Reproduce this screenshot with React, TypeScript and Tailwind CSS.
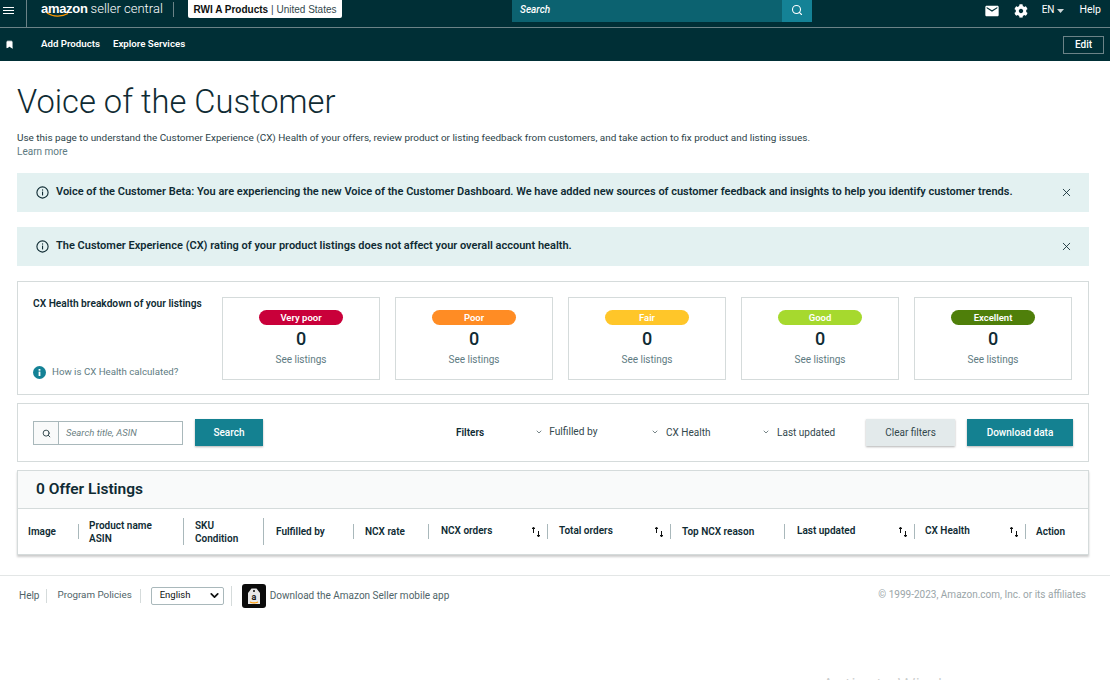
import React from 'react';
import { Search, X, ChevronDown, Bookmark } from 'lucide-react';
import { FaCog } from 'react-icons/fa';
import { MdEmail } from 'react-icons/md';

const grades = [
  { label: 'Very poor', color: 'bg-[#c9003a]' },
  { label: 'Poor', color: 'bg-[#ff8c24]' },
  { label: 'Fair', color: 'bg-[#ffc629]' },
  { label: 'Good', color: 'bg-[#a6d92e]' },
  { label: 'Excellent', color: 'bg-[#4f7f0a]' },
];

const SortIcon = () => (
  <svg width="10" height="12" viewBox="0 0 10 12" className="text-[#0f1111]">
    <path d="M2.5 7V1.5M1.2 3l1.3-2L3.8 3" fill="none" stroke="currentColor" strokeWidth="1" />
    <path d="M7.5 5v6M6.2 9l1.3 2L8.8 9" fill="none" stroke="currentColor" strokeWidth="1" />
  </svg>
);

const InfoOutline = () => (
  <svg width="13" height="13" viewBox="0 0 13 13" className="shrink-0">
    <circle cx="6.5" cy="6.5" r="5.6" fill="none" stroke="#0f2b33" strokeWidth="1.1" />
    <rect x="6" y="5.6" width="1.1" height="3.8" fill="#0f2b33" />
    <rect x="6" y="3.4" width="1.1" height="1.2" fill="#0f2b33" />
  </svg>
);

const Alert = ({ text }: { text: string }) => (
  <div className="flex items-center h-[39px] bg-[#e3f1f1] pl-[19px] pr-[16px]">
    <InfoOutline />
    <span className="ml-[7px] text-[11px] font-semibold text-[#0f2b33] flex-1 whitespace-nowrap">{text}</span>
    <X size={13} strokeWidth={1.6} className="text-[#0f2b33] -mt-px" />
  </div>
);

const Divider = ({ h = 'h-[15px]' }: { h?: string }) => <div className={`w-px ${h} bg-[#a9b8bb] shrink-0`} />;

const Th = ({ w, pl = 'pl-[12px]', lines, sort, h }: { w: string; pl?: string; lines: string[]; sort?: boolean; h?: string }) => (
  <>
    <div className={`${w} ${pl} shrink-0 flex items-center justify-between pr-[6px] text-[10px] font-semibold leading-[13px] text-[#0f2b33]`}>
      <div className={sort ? '-mt-[2px]' : ''}>
        {lines.map((l) => (
          <div key={l}>{l}</div>
        ))}
      </div>
      {sort && <SortIcon />}
    </div>
    {h !== 'none' && <Divider h={h} />}
  </>
);

const App = () => {
  return (
    <div className="h-screen overflow-hidden bg-white relative font-['Roboto','Noto_Sans',sans-serif] text-[#0f2b33]">
      {/* top bar */}
      <div className="bg-[#002f36] text-white">
        <div className="h-[28px] flex border-b border-[#6b8387]">
          <div className="w-[27px] border-r border-[#6b8387] pl-[3px] pt-[7px] shrink-0">
            <div className="w-[11px] h-px bg-white mb-[2px]" />
            <div className="w-[11px] h-px bg-white mb-[2px]" />
            <div className="w-[11px] h-px bg-white" />
          </div>
          <div className="relative ml-[14px] w-[120px] h-[22px] leading-[16px] whitespace-nowrap">
            <span className="font-['Liberation_Sans',sans-serif] text-[13px] font-bold tracking-[-0.3px]">amazon</span>
            <span className="font-['Roboto',sans-serif] text-[13px] ml-[3px] font-light">seller central</span>
            <svg width="26" height="6" viewBox="0 0 26 6" className="absolute left-[5px] top-[12px]">
              <path d="M1 1c6 4 15 4 21 .5" fill="none" stroke="#ff9900" strokeWidth="1.3" />
            </svg>
          </div>
          <div className="w-px h-[15px] bg-[#6b8387] ml-[12px] mt-[2px]" />
          <div className="ml-[14px] w-[154px] h-[18px] bg-white rounded-b-[2px] flex items-center justify-center font-['Liberation_Sans',sans-serif] text-[10px] text-[#0f1111] whitespace-nowrap">
            <span className="font-bold">RWI A Products</span>
            <span className="ml-[3px] text-[#33484d]">| United States</span>
          </div>
          <div className="ml-[170px] w-[270px] h-[22px] bg-[#0c6270] pl-[8px] pb-[3px] flex items-center text-[10px] italic font-medium">Search</div>
          <div className="w-[30px] h-[22px] bg-[#148296] flex items-center justify-center pb-[3px]">
            <Search size={12} strokeWidth={2.2} />
          </div>
          <div className="flex-1 flex items-start justify-end pr-[9px] pt-[3px] text-[10.5px]">
            <MdEmail size={16} className="mr-[14px]" />
            <FaCog size={14} className="mr-[14px] mt-px" />
            <span className="leading-[14px] text-[10px]">EN</span>
            <svg width="7" height="4" viewBox="0 0 7 4" className="ml-[3px] mt-[6px]">
              <path d="M0 0h7L3.5 4z" fill="#cfd8da" />
            </svg>
            <span className="ml-[15px] leading-[14px]">Help</span>
          </div>
        </div>
        <div className="h-[33px] flex items-center">
          <Bookmark size={9} fill="white" stroke="white" className="ml-[5px]" />
          <span className="ml-[27px] text-[9.7px] font-semibold">Add Products</span>
          <span className="ml-[13px] text-[9.7px] font-semibold">Explore Services</span>
          <div className="ml-auto mr-[6px] w-[41px] h-[18px] border border-[#6b8387] flex items-center justify-center text-[10px] font-medium">Edit</div>
        </div>
      </div>

      <div className="px-[17px] w-[1089px] box-content">
        <div className="w-[1072px]">
          <h1 className="mt-[19px] text-[32.7px] font-light leading-[44px] text-[#0f2b33]">Voice of the Customer</h1>
          <p className="mt-[7px] text-[9.95px] leading-[14px] text-[#2b4248]">
            Use this page to understand the Customer Experience (CX) Health of your offers, review product or listing feedback from customers, and take action to fix product and listing issues.
          </p>
          <p className="text-[10px] leading-[14px] text-[#5e7b82]">Learn more</p>

          <div className="mt-[14px] flex flex-col gap-[15px]">
            <Alert text="Voice of the Customer Beta: You are experiencing the new Voice of the Customer Dashboard. We have added new sources of customer feedback and insights to help you identify customer trends." />
            <Alert text="The Customer Experience (CX) rating of your product listings does not affect your overall account health." />
          </div>

          {/* breakdown */}
          <div className="mt-[15px] h-[114px] border border-[#d5dbdb] pl-[15px] pr-[16px] pt-[15px] flex">
            <div className="w-[189px] h-[84px] flex flex-col justify-between shrink-0">
              <div className="text-[10.2px] font-semibold leading-[14px]">CX Health breakdown of your listings</div>
              <div className="flex items-center gap-[6px] pb-[1px] text-[9.7px] text-[#5e7b82]">
                <svg width="13" height="13" viewBox="0 0 13 13">
                  <circle cx="6.5" cy="6.5" r="6.5" fill="#148296" />
                  <rect x="5.6" y="5.6" width="1.8" height="4.4" fill="white" />
                  <rect x="5.6" y="3" width="1.8" height="1.7" fill="white" />
                </svg>
                How is CX Health calculated?
              </div>
            </div>
            <div className="flex gap-[15px]">
              {grades.map((g) => (
                <div key={g.label} className="w-[158px] h-[83px] border border-[#d5dbdb] flex flex-col items-center pt-[12px]">
                  <div className={`w-[84px] h-[15px] rounded-full ${g.color} text-white text-[9.5px] font-semibold flex items-center justify-center pt-px`}>{g.label}</div>
                  <div className="text-[18px] font-medium leading-[24px] mt-[2px] text-[#0f2b33]">0</div>
                  <div className="text-[10px] leading-[14px] mt-[2px] text-[#5e7b82]">See listings</div>
                </div>
              ))}
            </div>
          </div>

          {/* filters */}
          <div className="mt-[8px] h-[59px] border border-[#d5dbdb] pl-[15px] pr-[15px] flex items-center">
            <div className="w-[150px] h-[24px] border border-[#a9b8bb] flex mt-[1px]">
              <div className="w-[25px] bg-[#f9fafa] border-r border-[#a9b8bb] flex items-center justify-center">
                <Search size={9} strokeWidth={2.6} className="text-[#33484d]" />
              </div>
              <div className="flex-1 pl-[7px] flex items-center text-[9.5px] italic text-[#6c7f83]">Search title, ASIN</div>
            </div>
            <button className="ml-[12px] w-[68px] h-[27px] pb-px bg-[#148191] text-white text-[10px] font-medium shadow-[0_1px_2px_rgba(0,0,0,0.3)]">Search</button>
            <span className="ml-[193px] pb-px text-[10px] font-semibold">Filters</span>
            <div className="ml-[51px] w-[116px] pb-px flex items-center text-[10.2px] text-[#33484d]">
              <ChevronDown size={8} className="mr-[6px]" />Fulfilled by
            </div>
            <div className="w-[111px] pb-px flex items-center text-[10px] text-[#33484d]">
              <ChevronDown size={8} className="mr-[7px]" />CX Health
            </div>
            <div className="w-[104px] pb-px flex items-center text-[10px] text-[#33484d]">
              <ChevronDown size={8} className="mr-[7px]" />Last updated
            </div>
            <button className="w-[89px] h-[27px] pb-px bg-[#e3eaeb] text-[#33484d] text-[10px] shadow-[0_1px_2px_rgba(0,0,0,0.3)]">Clear filters</button>
            <button className="ml-[12px] w-[106px] h-[27px] pb-px bg-[#148191] text-white text-[10px] font-medium shadow-[0_1px_2px_rgba(0,0,0,0.3)]">Download data</button>
          </div>

          {/* table */}
          <div className="mt-[8px] h-[85px] border border-[#d5dbdb] shadow-[0_2px_2px_rgba(0,0,0,0.2)]">
            <div className="h-[38px] bg-[#f9fafa] border-b border-[#d5dbdb] pl-[18px] flex items-center text-[15.5px] font-semibold">0 Offer Listings</div>
            <div className="h-[45px] flex items-center">
              <Th w="w-[60px]" pl="pl-[10px]" lines={['Image']} />
              <Th w="w-[104px]" pl="pl-[10px]" lines={['Product name', 'ASIN']} h="h-[27px]" />
              <Th w="w-[79px]" pl="pl-[11px]" lines={['SKU', 'Condition']} h="h-[27px]" />
              <Th w="w-[89px]" lines={['Fulfilled by']} />
              <Th w="w-[74px]" pl="pl-[11px]" lines={['NCX rate']} />
              <Th w="w-[118px]" lines={['NCX orders']} sort />
              <Th w="w-[122px]" pl="pl-[11px]" lines={['Total orders']} sort />
              <Th w="w-[113px]" pl="pl-[11px]" lines={['Top NCX reason']} />
              <Th w="w-[129px]" lines={['Last updated']} sort />
              <Th w="w-[110px]" pl="pl-[10px]" lines={['CX Health']} sort />
              <Th w="w-[60px]" pl="pl-[10px]" lines={['Action']} h="none" />
            </div>
          </div>
        </div>
      </div>

      {/* footer */}
      <div className="mt-[20px] border-t border-[#e3e6e6] h-[40px] pl-[19px] pr-[24px] flex items-center text-[10px] text-[#4f6468]">
        <span>Help</span>
        <div className="w-px h-[14px] bg-[#d5dbdb] ml-[7px] mr-[10px]" />
        <span className="text-[9.8px]">Program Policies</span>
        <div className="w-px h-[14px] bg-[#d5dbdb] ml-[8px] mr-[10px]" />
        <div className="w-[73px] h-[18px] border border-[#a9b8bb] rounded-[2px] flex items-center justify-between pl-[8px] pr-[2px] text-[9.5px] text-[#0f1111]">
          English
          <ChevronDown size={13} strokeWidth={3.2} />
        </div>
        <div className="w-px h-[20px] bg-[#d5dbdb] ml-[7px] mr-[10px]" />
        <svg width="24" height="24" viewBox="0 0 24 24" className="mr-[4px]">
          <rect width="24" height="24" rx="3" fill="#0b0b0b" />
          <path d="M6 9l3.5-4.5h5L18 9v11H6z" fill="#e8e8e8" />
          <circle cx="12" cy="7" r="1" fill="#0b0b0b" />
          <path d="M8 18c2.5 1.2 5.5 1.2 8 0" fill="none" stroke="#ff9900" strokeWidth="1.2" />
          <text x="12" y="16" textAnchor="middle" fontSize="9" fontWeight="700" fill="#111">a</text>
        </svg>
        <span>Download the Amazon Seller mobile app</span>
        <span className="ml-auto -mt-[3px] text-[#9aa5a8]">© 1999-2023, Amazon.com, Inc. or its affiliates</span>
      </div>

      {/* windows watermark */}
      <div className="absolute left-[822px] top-[671px] text-[20px] font-light text-[#c9cccc] whitespace-nowrap">Activate Windows</div>
    </div>
  );
};

export default App;
